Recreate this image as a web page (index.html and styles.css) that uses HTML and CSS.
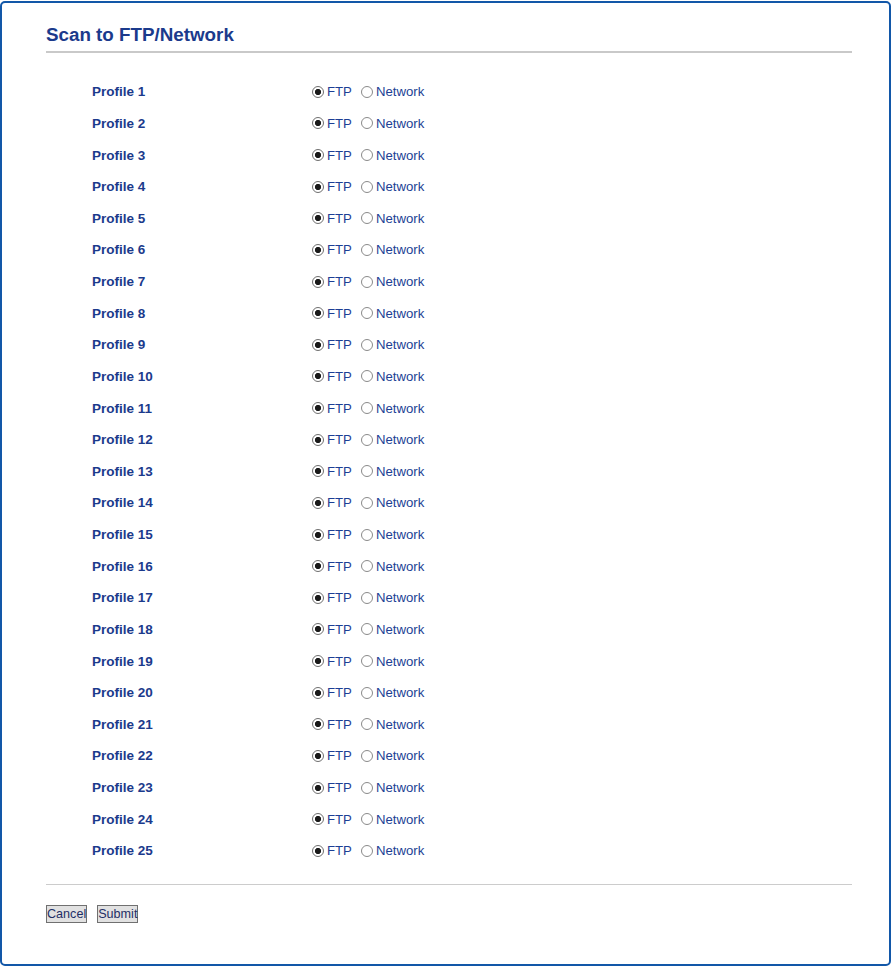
FILE: index.html
```html
<!DOCTYPE html>
<html>
<head>
<meta charset="utf-8">
<title>Scan to FTP/Network</title>
<link rel="stylesheet" href="styles.css">
</head>
<body>
<div class="frame">
  <h2 class="title">Scan to FTP/Network</h2>
  <div class="rows" id="rows"></div>
  <div class="divider"></div>
  <div class="buttons">
    <button class="btn" type="button">Cancel</button>
    <button class="btn" type="button">Submit</button>
  </div>
</div>
<script>
  var rows = document.getElementById('rows');
  var html = '';
  for (var i = 1; i <= 25; i++) {
    html += '<div class="row"><span class="label">Profile ' + i + '</span>' +
      '<label class="opt"><input type="radio" name="p' + i + '" checked><span>FTP</span></label>' +
      '<label class="opt"><input type="radio" name="p' + i + '"><span>Network</span></label></div>';
  }
  rows.innerHTML = html;
</script>
</body>
</html>
```

FILE: styles.css
```css
html, body {
  margin: 0;
  padding: 0;
  background: #ffffff;
}
body {
  font-family: "Liberation Sans", Arial, sans-serif;
}
.frame {
  box-sizing: border-box;
  margin-top: 1px;
  width: 891px;
  height: 965px;
  border: 2px solid #1257a8;
  border-radius: 5px;
  padding: 0 37px 0 44px;
}
.title {
  margin: 21px 0 0 0;
  font-size: 18.8px;
  line-height: 22px;
  font-weight: bold;
  color: #1b3a8c;
  padding-bottom: 5px;
  border-bottom: 2px solid #c9c9c9;
}
.rows {
  margin-top: 23px;
}
.row {
  display: flex;
  align-items: center;
  height: 31.625px;
}
.label {
  margin-left: 46px;
  width: 220px;
  font-size: 13.5px;
  font-weight: bold;
  color: #1b3a8c;
}
.opt {
  display: flex;
  align-items: center;
  font-size: 13.2px;
  color: #1c3f94;
  margin-right: 9px;
}
.opt input {
  -webkit-appearance: none;
  appearance: none;
  box-sizing: border-box;
  width: 12px;
  height: 12px;
  margin: 0 3px 0 0;
  border: 1px solid #8a8a8a;
  border-radius: 50%;
  background: #ffffff;
}
.opt input:checked {
  border-color: #6f6f6f;
  background: radial-gradient(circle, #1a1a1a 0 2.8px, #ffffff 3.3px);
}
.divider {
  margin-top: 17px;
  border-top: 1px solid #cccccc;
}
.buttons {
  display: flex;
  gap: 10px;
  margin-top: 20px;
}
.btn {
  font-family: "Liberation Sans", Arial, sans-serif;
  font-size: 12.6px;
  line-height: 16px;
  padding: 0;
  margin: 0;
  border: 1px solid #707070;
  background: #e1e1e1;
  color: #1f2f66;
  border-radius: 0;
}
```
